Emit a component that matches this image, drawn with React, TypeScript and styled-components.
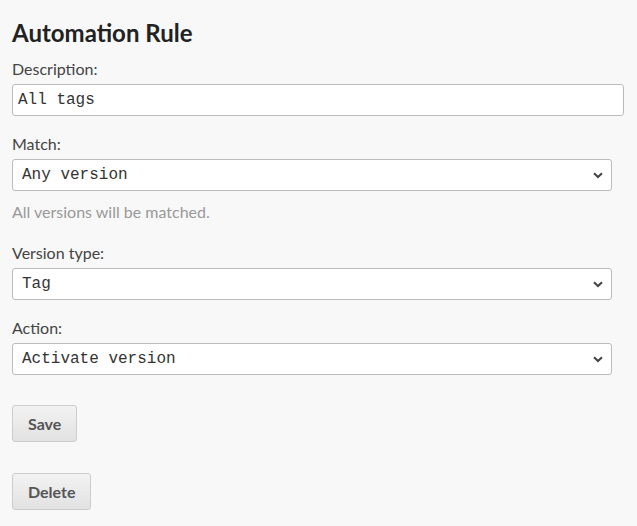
import React from "react";
import styled, { createGlobalStyle } from "styled-components";

const Global = createGlobalStyle`
  html, body { margin: 0; padding: 0; background: #f8f8f8; }
  body { font-family: Lato, "Open Sans", sans-serif; color: #333; }
`;

const Page = styled.div`
  width: 612px;
  padding: 18px 0 0 12px;
  display: flex;
  flex-direction: column;
`;

const Title = styled.h1`
  margin: 0 0 12px 0;
  font-size: 24px;
  line-height: 30px;
  font-weight: 700;
  color: #222;
`;

const Field = styled.div<{ $mb?: number }>`
  display: flex;
  flex-direction: column;
  margin-bottom: ${(p) => p.$mb ?? 19}px;
`;

const Label = styled.label`
  font-size: 16px;
  line-height: 18px;
  margin-bottom: 6px;
  color: #444;
`;

const TextInput = styled.input<{ $w: number }>`
  box-sizing: border-box;
  width: ${(p) => p.$w}px;
  height: 32px;
  border: 1px solid #bbb;
  border-radius: 3px;
  background: #fff;
  padding: 0 5px;
  font-family: "Liberation Mono", monospace;
  font-size: 16px;
  color: #333;
`;

const SelectBox = styled.div`
  box-sizing: border-box;
  width: 600px;
  height: 32px;
  border: 1px solid #bbb;
  border-radius: 3px;
  background: #fff;
  padding: 0 8px 0 9px;
  display: flex;
  align-items: center;
  justify-content: space-between;
  font-family: "Liberation Mono", monospace;
  font-size: 16px;
  color: #333;
`;

const Help = styled.p`
  margin: 12px 0 0 0;
  font-size: 16px;
  line-height: 18px;
  color: #999;
`;

const Button = styled.button<{ $mt: number }>`
  align-self: flex-start;
  box-sizing: border-box;
  height: 37px;
  padding: 0 15px;
  border: 1px solid #ccc;
  border-radius: 3px;
  background: linear-gradient(#f2f2f2, #e2e2e2);
  font-family: Lato, sans-serif;
  font-weight: 700;
  font-size: 16px;
  color: #555;
  margin-top: ${(p) => p.$mt}px;
`;

const Chevron = () => (
  <svg width="10" height="7" viewBox="0 0 10 7">
    <path d="M1 1.2 L5 5 L9 1.2" fill="none" stroke="#444" strokeWidth="2" />
  </svg>
);

const Select = ({ value }: { value: string }) => (
  <SelectBox>
    <span>{value}</span>
    <Chevron />
  </SelectBox>
);

export default function App() {
  return (
    <>
      <Global />
      <Page>
        <Title>Automation Rule</Title>
        <Field>
          <Label>Description:</Label>
          <TextInput $w={612} defaultValue="All tags" />
        </Field>
        <Field $mb={23}>
          <Label>Match:</Label>
          <Select value="Any version" />
          <Help>All versions will be matched.</Help>
        </Field>
        <Field>
          <Label>Version type:</Label>
          <Select value="Tag" />
        </Field>
        <Field $mb={0}>
          <Label>Action:</Label>
          <Select value="Activate version" />
        </Field>
        <Button $mt={30}>Save</Button>
        <Button $mt={31}>Delete</Button>
      </Page>
    </>
  );
}
